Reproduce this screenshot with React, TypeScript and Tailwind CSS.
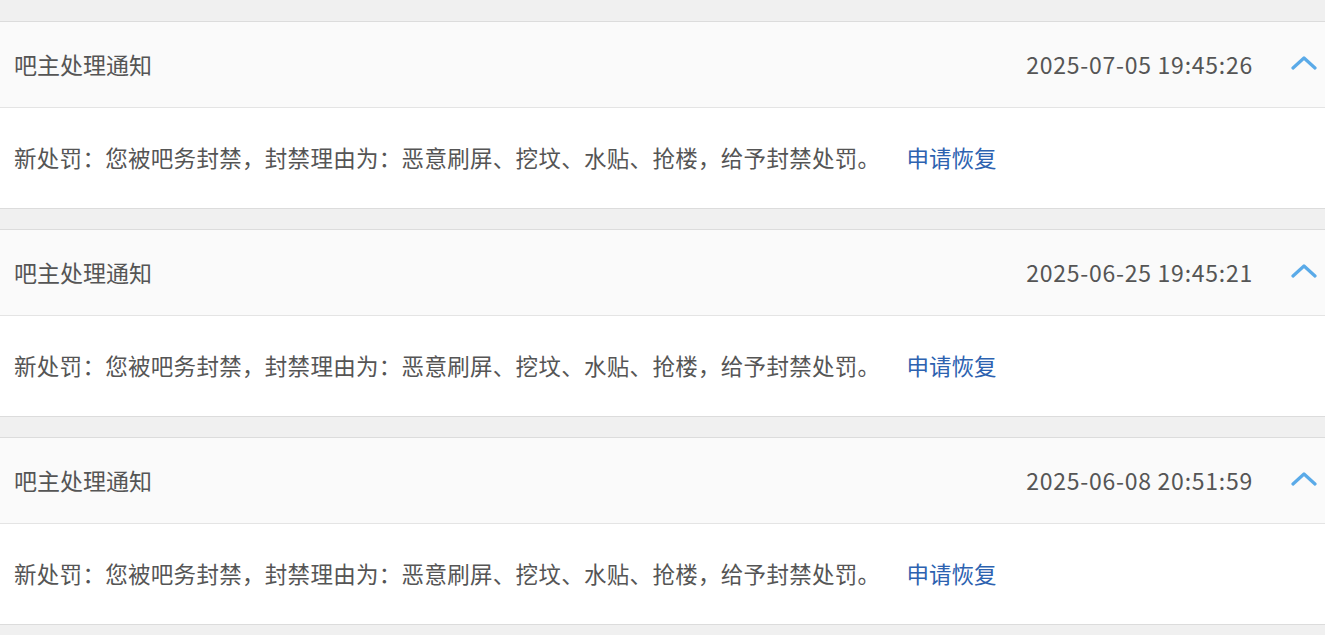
import React from 'react';

const notices = [
  { time: '2025-07-05 19:45:26' },
  { time: '2025-06-25 19:45:21' },
  { time: '2025-06-08 20:51:59' },
];

const reason = '新处罚：您被吧务封禁，封禁理由为：恶意刷屏、挖坟、水贴、抢楼，给予封禁处罚。';

function ChevronUp() {
  return (
    <svg width="26" height="16" viewBox="0 0 26 16" fill="none">
      <path d="M2 13 L13 3 L24 13" stroke="#5aaae8" strokeWidth="3.2" strokeLinecap="round" strokeLinejoin="round" />
    </svg>
  );
}

export default function App() {
  return (
    <div
      className="w-[1325px] h-[635px] overflow-hidden bg-[#f0f0f0] pt-[21px] flex flex-col gap-[20px]"
      style={{ fontFamily: '"Noto Sans CJK SC", "Noto Sans", sans-serif' }}
    >
      {notices.map((n, i) => (
        <div key={i} className="border-y border-[#dcdcdc]">
          <div className="h-[86px] bg-[#fafafa] border-b border-[#e4e4e4] flex items-center pl-[14px] pr-[8px] text-[#555]">
            <span className="flex-1 text-[23px]">吧主处理通知</span>
            <span className="text-[23px] tracking-[0.75px]">{n.time}</span>
            <span className="ml-[38px] mt-[-4px] flex">
              <ChevronUp />
            </span>
          </div>
          <div className="h-[100px] bg-white flex items-center pl-[14px] text-[22.5px] text-[#555]">
            <span className="tracking-[0.3px]">{reason}</span>
            <a className="ml-[26px] text-[#2d62b0] cursor-pointer">申请恢复</a>
          </div>
        </div>
      ))}
    </div>
  );
}
